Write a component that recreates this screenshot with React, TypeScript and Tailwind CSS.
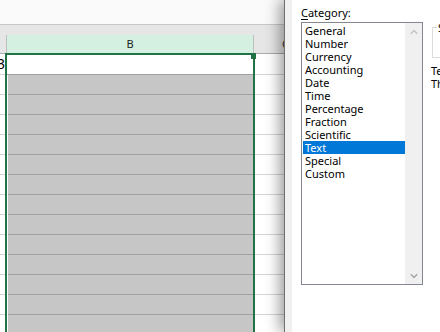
import React from "react";

const items = [
  "General",
  "Number",
  "Currency",
  "Accounting",
  "Date",
  "Time",
  "Percentage",
  "Fraction",
  "Scientific",
  "Text",
  "Special",
  "Custom",
];

const ROWS = 13;

export default function App() {
  return (
    <div className="relative w-[440px] h-[332px] overflow-hidden bg-white font-['Noto_Sans',sans-serif] text-black">
      {/* Spreadsheet */}
      <div className="flex flex-col h-full">
        <div className="h-[25px] shrink-0 bg-[#fafafa] border-b border-[#c8c8c8]" />
        <div className="h-[10px] shrink-0 bg-[#e6e6e6]" />
        <div className="flex h-[18px] shrink-0 bg-[#e6e6e6] text-[11px] leading-[18px]">
          <div className="w-[7px] shrink-0 border-r border-[#bfbfbf]" />
          <div className="w-[247px] shrink-0 bg-[#d3f0e0] border-r border-[#bfbfbf] text-center text-[#222]">B</div>
          <div className="flex-1 pl-[28px] text-[#333]">C</div>
        </div>
        <div className="flex flex-1 min-h-0">
          {/* column A sliver */}
          <div className="w-[5px] shrink-0 overflow-hidden border-t border-[#ababab] flex flex-col">
            <div className="h-[21px] shrink-0 border-b border-[#d4d4d4] flex justify-end text-[14px] leading-[20px] whitespace-nowrap">
              <span>13</span>
            </div>
            {Array.from({ length: ROWS }).map((_, i) => (
              <div key={i} className="h-[20px] shrink-0 border-b border-[#d4d4d4]" />
            ))}
          </div>
          {/* selection */}
          <div className="w-[250px] shrink-0 border-t-2 border-x-2 border-[#217346] bg-white flex flex-col overflow-hidden">
            <div className="h-[20px] shrink-0 bg-white border-b border-[#a0a0a0]" />
            {Array.from({ length: ROWS }).map((_, i) => (
              <div key={i} className="ml-px h-[20px] shrink-0 bg-[#c6c6c6] border-b border-[#a0a0a0]" />
            ))}
          </div>
          {/* column C */}
          <div className="flex-1 border-t border-[#ababab] flex flex-col overflow-hidden">
            <div className="h-[21px] shrink-0 border-b border-[#d4d4d4]" />
            {Array.from({ length: ROWS }).map((_, i) => (
              <div key={i} className="h-[20px] shrink-0 border-b border-[#d4d4d4]" />
            ))}
          </div>
        </div>
      </div>

      {/* fill handle */}
      <div className="absolute left-[251px] top-[53px] w-[5px] h-[6px] bg-[#217346]" />

      {/* Format Cells dialog */}
      <div className="absolute top-0 bottom-0 left-[284px] right-0 flex border-l border-[#707070] shadow-[-4px_0_14px_rgba(0,0,0,0.4)]">
        <div className="w-[7px] shrink-0 bg-[#f0f0f0]" />
        <div className="flex-1 min-w-0 overflow-hidden bg-white flex pl-[9px] text-[11px] leading-[13px]">
          <div className="flex flex-col shrink-0">
            <div className="h-[22px] pt-[6px]">
              <span className="underline underline-offset-[2px]">C</span>ategory:
            </div>
            <div className="w-[122px] h-[263px] border border-[#828790] flex">
              <div className="w-[103px] pt-px flex flex-col">
                {items.map((it) => (
                  <div
                    key={it}
                    className={
                      it === "Text"
                        ? "ml-px h-[13px] pl-[2px] bg-[#0078d7] text-white whitespace-nowrap"
                        : "ml-px h-[13px] pl-[2px] whitespace-nowrap"
                    }
                  >
                    {it}
                  </div>
                ))}
              </div>
              <div className="w-[17px] bg-[#f0f0f0] flex flex-col justify-between">
                <div className="h-[17px] flex items-center justify-center">
                  <svg width="8" height="6" viewBox="0 0 8 6">
                    <polyline points="0.8,4.8 4,1.6 7.2,4.8" fill="none" stroke="#c4c4c4" strokeWidth="1.4" />
                  </svg>
                </div>
                <div className="h-[17px] flex items-center justify-center">
                  <svg width="8" height="6" viewBox="0 0 8 6">
                    <polyline points="0.8,1.2 4,4.4 7.2,1.2" fill="none" stroke="#a3a3a3" strokeWidth="1.4" />
                  </svg>
                </div>
              </div>
            </div>
          </div>
          <div className="ml-[8px] flex flex-col shrink-0">
            <div className="relative ml-px mt-[27px] h-[31px] w-[120px] border border-[#dcdcdc]">
              <span className="absolute -top-[7px] left-[4px] bg-white px-px whitespace-nowrap">Sample</span>
            </div>
            <div className="mt-[6px] whitespace-nowrap">
              <div>Text format cells are treated as text even when a</div>
              <div>The cell is displayed exactly as entered.</div>
            </div>
          </div>
        </div>
      </div>
    </div>
  );
}
